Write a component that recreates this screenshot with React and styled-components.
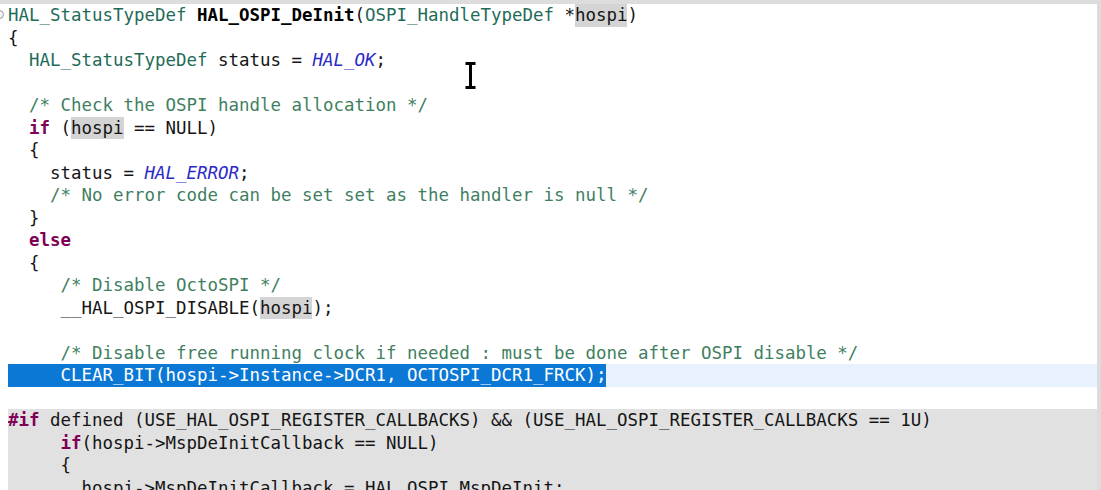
import React from "react";
import styled, { createGlobalStyle } from "styled-components";

const GlobalStyle = createGlobalStyle`
  html, body {
    margin: 0;
    padding: 0;
    background: #ffffff;
  }
`;

const Editor = styled.div`
  position: relative;
  width: 1101px;
  height: 490px;
  overflow: hidden;
  box-sizing: border-box;
  background: #ffffff;
  border-top: 4px solid #dddddd;
  border-right: 4px solid #dcdcdc;
  font-family: "DejaVu Sans Mono", "Liberation Mono", monospace;
  font-size: 17.45px;
`;

const Row = styled.div`
  display: flex;
  height: 22.5px;
  line-height: 22.5px;
`;

const Gutter = styled.div`
  position: relative;
  flex: 0 0 8px;
  background: #ffffff;
`;

const FoldMark = styled.span`
  position: absolute;
  left: -5px;
  top: 6px;
  width: 9px;
  height: 9px;
  border-radius: 50%;
  border: 1px solid #9a9a9a;
  box-sizing: border-box;
  background: #f4f4f4;
`;

const Content = styled.div`
  flex: 1;
  display: flex;
  white-space: pre;
  color: #151515;
  background: ${({ $kind }) =>
    $kind === "inactive" ? "#e1e1e1" : $kind === "current" ? "#e8f2fe" : "transparent"};
`;

const Selection = styled.span`
  display: inline-block;
  height: 100%;
  background: #0b78d6;
  color: #ffffff;
`;

const Tok = styled.span`
  display: inline-block;
  height: 100%;
  color: ${({ $t }) =>
    ({
      type: "#1f6b58",
      fn: "#000000",
      enum: "#2a2ac8",
      comment: "#3f7f5f",
      kw: "#7f0055",
      occ: "#151515",
    }[$t] || "inherit")};
  font-weight: ${({ $t }) => ($t === "fn" || $t === "kw" ? 700 : 400)};
  font-style: ${({ $t }) => ($t === "enum" ? "italic" : "normal")};
  background: ${({ $t }) => ($t === "occ" ? "#d4d4d4" : "transparent")};
`;

const IBeam = styled.svg`
  position: absolute;
  left: 464px;
  top: 58px;
`;

const lines = [
  { fold: true, toks: [["type", "HAL_StatusTypeDef"], ["", " "], ["fn", "HAL_OSPI_DeInit"], ["", "("], ["type", "OSPI_HandleTypeDef"], ["", " *"], ["occ", "hospi"], ["", ")"]] },
  { toks: [["", "{"]] },
  { toks: [["", "  "], ["type", "HAL_StatusTypeDef"], ["", " status = "], ["enum", "HAL_OK"], ["", ";"]] },
  { toks: [] },
  { toks: [["", "  "], ["comment", "/* Check the OSPI handle allocation */"]] },
  { toks: [["", "  "], ["kw", "if"], ["", " ("], ["occ", "hospi"], ["", " == NULL)"]] },
  { toks: [["", "  {"]] },
  { toks: [["", "    status = "], ["enum", "HAL_ERROR"], ["", ";"]] },
  { toks: [["", "    "], ["comment", "/* No error code can be set set as the handler is null */"]] },
  { toks: [["", "  }"]] },
  { toks: [["", "  "], ["kw", "else"]] },
  { toks: [["", "  {"]] },
  { toks: [["", "     "], ["comment", "/* Disable OctoSPI */"]] },
  { toks: [["", "     __HAL_OSPI_DISABLE("], ["occ", "hospi"], ["", ");"]] },
  { toks: [] },
  { toks: [["", "     "], ["comment", "/* Disable free running clock if needed : must be done after OSPI disable */"]] },
  { kind: "current", selected: "     CLEAR_BIT(hospi->Instance->DCR1, OCTOSPI_DCR1_FRCK);" },
  { toks: [] },
  { kind: "inactive", toks: [["kw", "#if"], ["", " defined (USE_HAL_OSPI_REGISTER_CALLBACKS) && (USE_HAL_OSPI_REGISTER_CALLBACKS == 1U)"]] },
  { kind: "inactive", toks: [["", "     "], ["kw", "if"], ["", "(hospi->MspDeInitCallback == NULL)"]] },
  { kind: "inactive", toks: [["", "     {"]] },
  { kind: "inactive", toks: [["", "       hospi->MspDeInitCallback = HAL_OSPI_MspDeInit;"]] },
];

function CodeLine({ line }) {
  return (
    <Row>
      <Gutter>{line.fold && <FoldMark />}</Gutter>
      <Content $kind={line.kind}>
        {line.selected ? (
          <Selection>{line.selected}</Selection>
        ) : (
          line.toks.map(([t, text], i) => (
            <Tok key={i} $t={t}>
              {text}
            </Tok>
          ))
        )}
      </Content>
    </Row>
  );
}

export default function App() {
  return (
    <>
      <GlobalStyle />
      <Editor>
        {lines.map((line, i) => (
          <CodeLine key={i} line={line} />
        ))}
        <IBeam width="13" height="27" viewBox="0 0 13 27">
          <path
            d="M1 1h11M1 26h11M6.5 1v25"
            stroke="#ffffff"
            strokeWidth="5"
            fill="none"
          />
          <path
            d="M1.5 1.5h10M1.5 25.5h10M6.5 1.5v24"
            stroke="#000000"
            strokeWidth="3"
            fill="none"
          />
        </IBeam>
      </Editor>
    </>
  );
}
